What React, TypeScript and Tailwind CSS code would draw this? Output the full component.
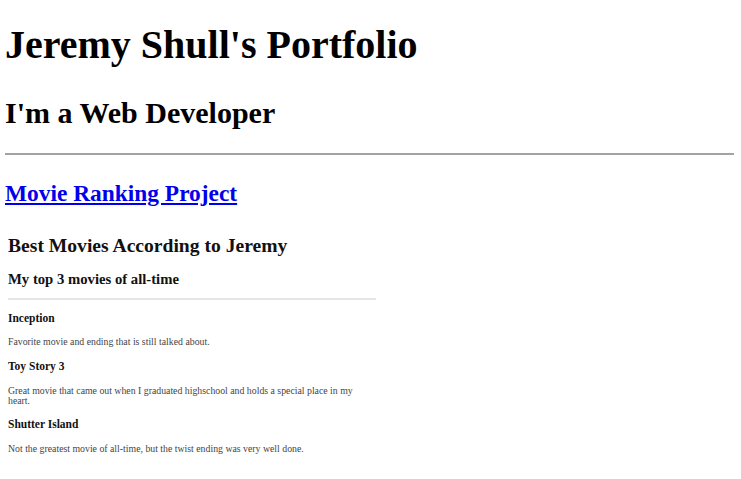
export default function App() {
  return (
    <div className="flex min-h-screen flex-col bg-white pl-[5px] pr-[7px] font-['Liberation_Serif',serif] text-black">
      <h1 className="mt-[22px] text-[40px] font-bold leading-[46px]">
        Jeremy Shull's Portfolio
      </h1>
      <h2 className="mt-[28px] text-[30px] font-bold leading-[34px]">
        I'm a Web Developer
      </h2>
      <hr className="mt-[23px] h-[2px] border-0 bg-[#a3a3a3]" />
      <h3 className="mt-[25px] text-[23.4px] font-bold leading-[26px]">
        <a href="#" className="text-[#0000ee] underline">
          Movie Ranking Project
        </a>
      </h3>

      <div className="ml-[3px] mt-[29px] flex w-[368px] flex-col pb-6">
        <h1 className="text-[19.6px] font-bold leading-[21px] text-[#111]">
          Best Movies According to Jeremy
        </h1>
        <h2 className="mt-[15px] text-[14.7px] font-bold leading-[16px] text-[#111]">
          My top 3 movies of all-time
        </h2>
        <div className="mt-[11px] h-[2px] bg-[#e6e6e6]" />
        <h3 className="mt-[12px] text-[11.5px] font-bold leading-[12px] text-[#111]">
          Inception
        </h3>
        <p className="mt-[13px] text-[9.8px] leading-[10px] text-[#444]">
          Favorite movie and ending that is still talked about.
        </p>
        <h3 className="mt-[13px] text-[11.5px] font-bold leading-[12px] text-[#111]">
          Toy Story 3
        </h3>
        <p className="mt-[14px] text-[9.8px] leading-[10px] text-[#444]">
          Great movie that came out when I graduated highschool and holds a
          special place in my heart.
        </p>
        <h3 className="mt-[12px] text-[11.5px] font-bold leading-[12px] text-[#111]">
          Shutter Island
        </h3>
        <p className="mt-[14px] text-[9.8px] leading-[10px] text-[#444]">
          Not the greatest movie of all-time, but the twist ending was very
          well done.
        </p>
      </div>
    </div>
  )
}
